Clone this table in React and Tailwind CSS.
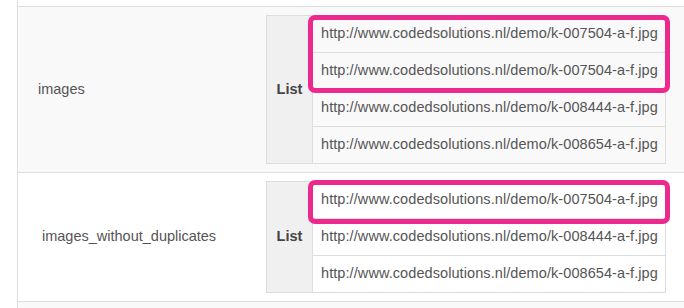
import React from 'react';

const rows = [
    {
        label: 'images',
        labelPad: 'pl-[20px]',
        bg: 'bg-[#f9f9f9]',
        urls: [
            'http://www.codedsolutions.nl/demo/k-007504-a-f.jpg',
            'http://www.codedsolutions.nl/demo/k-007504-a-f.jpg',
            'http://www.codedsolutions.nl/demo/k-008444-a-f.jpg',
            'http://www.codedsolutions.nl/demo/k-008654-a-f.jpg',
        ],
        highlight: 'top-[-1px] h-[78px]',
    },
    {
        label: 'images_without_duplicates',
        labelPad: 'pl-[24px]',
        bg: 'bg-white',
        urls: [
            'http://www.codedsolutions.nl/demo/k-007504-a-f.jpg',
            'http://www.codedsolutions.nl/demo/k-008444-a-f.jpg',
            'http://www.codedsolutions.nl/demo/k-008654-a-f.jpg',
        ],
        highlight: 'top-[-2px] h-[44px]',
    },
];

const ListTable = ({ urls, highlight }) => (
    <div className="relative flex w-[400px] border border-[#ddd]">
        <div className="flex w-[46px] flex-none items-center justify-center border-r border-[#ddd] bg-[#f0f0f0] font-bold text-[#444]">
            List
        </div>
        <div className="flex flex-1 flex-col tracking-[0.08px]">
            {urls.map((url, i) => (
                <div
                    key={i}
                    className={`flex h-[36px] items-center pl-[8px] ${i > 0 ? 'h-[37px] border-t border-[#ddd]' : ''}`}
                >
                    {url}
                </div>
            ))}
        </div>
        {/* pink highlight drawn over the duplicated rows */}
        <div className={`pointer-events-none absolute left-[41px] w-[362px] rounded-[7px] border-[5px] border-[#ec2a8d] ${highlight}`} />
    </div>
);

export default function App() {
    return (
        <div className="h-[308px] w-[684px] overflow-hidden bg-white font-['Liberation_Sans',Arial,sans-serif] text-[14.5px] text-[#555]">
            <div className="ml-[17px] h-full border-l border-[#ddd]">
                <div className="h-[7px] border-b border-[#ddd]" />
                {rows.map((row) => (
                    <div key={row.label} className={`flex items-center border-b border-[#ddd] py-[8px] ${row.bg}`}>
                        <div className={`w-[248px] flex-none ${row.labelPad}`}>{row.label}</div>
                        <ListTable urls={row.urls} highlight={row.highlight} />
                    </div>
                ))}
                <div className="h-[20px] bg-[#f9f9f9]" />
            </div>
        </div>
    );
}
